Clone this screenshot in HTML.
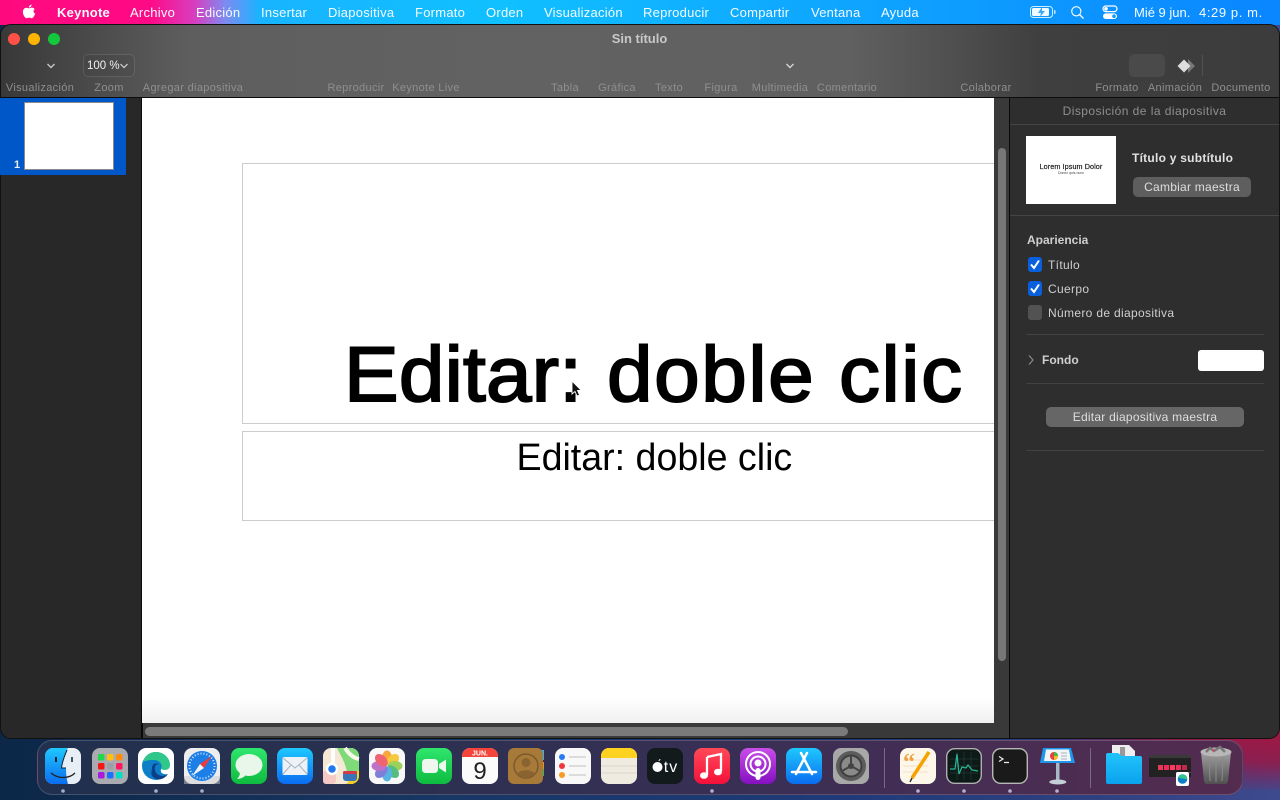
<!DOCTYPE html>
<html lang="es"><head><meta charset="utf-8"><title>Keynote</title>
<style>
*{box-sizing:border-box;margin:0;padding:0}
html,body{width:1280px;height:800px;overflow:hidden}
body{position:relative;background:linear-gradient(90deg,#0c2747 0,#173765 35%,#1f3a78 65%,#2e4080 85%,#3e4a8e 100%);font-family:"Liberation Sans",sans-serif}
.a{position:absolute}
.t{position:absolute;white-space:nowrap;line-height:16px}
.c{transform:translateX(-50%)}
#glow{left:1050px;top:700px;width:300px;height:90px;background:radial-gradient(ellipse at 80% 30%,#a5163f 0,#8a1f50 40%,rgba(120,30,80,0) 75%)}
#menu{left:0;top:0;width:1280px;height:25px;background:linear-gradient(90deg,#ff0a7e 0,#ff0a86 150px,#d63fc0 195px,#7f8af0 225px,#19b4ff 260px,#10c0ff 500px,#0fa8ff 800px,#0a86ff 1280px);color:#fff;font-size:13px}
#menu .t{top:5px;color:#f4fbff;letter-spacing:.25px}
#win{left:0;top:24px;width:1280px;height:715px;border-radius:11px;overflow:hidden;background:#282828;border:1px solid #111}
#tb{left:-1px;top:0;width:1282px;height:73px;background:linear-gradient(90deg,#383838 0,#444 60px,#5e5e5e 190px,#626262 500px,#606060 850px,#4e4e4e 960px,#3f3f3f 1040px,#3c3c3c 1280px);border-bottom:1px solid #0c0c0c}
.lab{font-size:11px;color:#8f8f8f;top:55px;letter-spacing:.33px}
.dot{width:12px;height:12px;border-radius:50%;top:8px}
.p{color:#cfcfcf;font-size:12px;letter-spacing:.33px}
.line{height:1px;background:#454545}
.cb{left:1027px;width:14px;height:15px;border-radius:3px;background:#0a60dc}
.cb svg{position:absolute;left:0;top:0}
.btn{background:#5e5e5e;border-radius:5px;color:#dedede;font-size:12px;text-align:center;line-height:20px;letter-spacing:.25px}
.w{position:absolute;top:231px;white-space:nowrap;font-size:78px;line-height:90px;color:#000;-webkit-text-stroke:1.9px #000;transform:scaleX(1.05);transform-origin:0 0}
</style></head><body>
<div class="a" id="glow"></div>

<div class="a" id="menu">
<svg class="a" style="left:22px;top:4px" width="14" height="16" viewBox="0 0 14 16"><path fill="#fff" d="M9.600 0.600C9.700 2 8.400 3.600 6.900 3.500 6.700 2.100 8.200 .7 9.600 .6ZM7 4.300C7.700 4.300 8.700 3.500 10 3.600 11 3.700 12 4.100 12.700 5.100 11 6.200 11.200 8.700 13.200 9.600 12.700 11.200 11.200 14.200 9.600 14.200 8.700 14.200 8.300 13.600 7.100 13.600 5.900 13.600 5.400 14.200 4.600 14.200 3 14.200 .9 10.900 .9 8 .9 5.200 2.700 3.700 4.400 3.700 5.500 3.700 6.300 4.300 7 4.300Z"/></svg>
<span class="t" style="left:57px;font-weight:700">Keynote</span>
<span class="t" style="left:130px">Archivo</span>
<span class="t" style="left:196px">Edición</span>
<span class="t" style="left:261px">Insertar</span>
<span class="t" style="left:328px">Diapositiva</span>
<span class="t" style="left:415px">Formato</span>
<span class="t" style="left:486px">Orden</span>
<span class="t" style="left:544px">Visualización</span>
<span class="t" style="left:643px">Reproducir</span>
<span class="t" style="left:730px">Compartir</span>
<span class="t" style="left:811px">Ventana</span>
<span class="t" style="left:881px">Ayuda</span>
<svg class="a" style="left:1030px;top:5px" width="26" height="14" viewBox="0 0 26 14"><rect x=".5" y="1.500" width="22" height="11" rx="3" fill="none" stroke="#cfeeff" stroke-width="1"/><rect x="2" y="3" width="17" height="8" rx="1.500" fill="#f2fbff"/><path d="M12 2 8 8h3l-1 4 5-6h-3z" fill="#3aa8f5"/><rect x="24" y="5" width="1.500" height="4" rx=".7" fill="#bfe8ff"/></svg>
<svg class="a" style="left:1070px;top:5px" width="15" height="15" viewBox="0 0 15 15"><circle cx="6.300" cy="6.300" r="4.600" fill="none" stroke="#fff" stroke-width="1.100"/><path d="M9.800 9.800 13.500 13.500" stroke="#fff" stroke-width="1.300"/></svg>
<svg class="a" style="left:1102px;top:5px" width="16" height="15" viewBox="0 0 16 15"><rect x="1" y="1" width="14" height="5.600" rx="2.800" fill="none" stroke="#fff" stroke-width="1.200"/><circle cx="4" cy="3.800" r="1.800" fill="#fff"/><rect x="1" y="8.400" width="14" height="5.600" rx="2.800" fill="#fff"/><circle cx="12" cy="11.200" r="1.800" fill="#0f9cff"/></svg>
<span class="t" style="left:1134px;letter-spacing:0">Mié 9 jun.</span>
<span class="t" style="left:1199px;letter-spacing:.6px">4:29 p. m.</span>
</div>

<div class="a" id="win">
<div class="a" id="tb">
<div class="a dot" style="left:8px;background:#ff5147"></div>
<div class="a dot" style="left:28px;background:#ffb400"></div>
<div class="a dot" style="left:48px;background:#13c83a"></div>
<span class="t c" style="left:639.500px;top:6px;font-size:13px;font-weight:700;color:#c8c8c8">Sin título</span>
<svg class="a" style="left:46px;top:37px" width="10" height="8" viewBox="0 0 10 8"><path d="M1.500 2 5 5.500 8.500 2" fill="none" stroke="#c4c4c4" stroke-width="1.400"/></svg>
<div class="a" style="left:83px;top:29px;width:52px;height:23px;border-radius:5px;background:rgba(0,0,0,.04);border:1px solid rgba(255,255,255,.11)"></div>
<span class="t" style="left:87px;top:33px;font-size:11.500px;color:#f0f0f0">100 %</span>
<svg class="a" style="left:119px;top:37px" width="10" height="8" viewBox="0 0 10 8"><path d="M1.500 2 5 5.500 8.500 2" fill="none" stroke="#d4d4d4" stroke-width="1.200"/></svg>
<svg class="a" style="left:785px;top:37px" width="10" height="8" viewBox="0 0 10 8"><path d="M1.500 2 5 5.500 8.500 2" fill="none" stroke="#d4d4d4" stroke-width="1.400"/></svg>
<div class="a" style="left:1129px;top:29px;width:36px;height:23px;border-radius:5px;background:#4a4a4a"></div>
<svg class="a" style="left:1176px;top:33px" width="20" height="16" viewBox="0 0 20 16"><path d="M12 1 19 8 12 15z" fill="#777"/><path d="M8 1.500 14.500 8 8 14.500 1.500 8z" fill="#ddd"/></svg>
<div class="a" style="left:1202px;top:30px;width:1px;height:21px;background:#515151"></div>
<span class="t lab c" style="left:40px">Visualización</span>
<span class="t lab c" style="left:109px">Zoom</span>
<span class="t lab c" style="left:193px">Agregar diapositiva</span>
<span class="t lab c" style="left:356px">Reproducir</span>
<span class="t lab c" style="left:426px">Keynote Live</span>
<span class="t lab c" style="left:565px">Tabla</span>
<span class="t lab c" style="left:617px">Gráfica</span>
<span class="t lab c" style="left:669px">Texto</span>
<span class="t lab c" style="left:721px">Figura</span>
<span class="t lab c" style="left:780px">Multimedia</span>
<span class="t lab c" style="left:847px">Comentario</span>
<span class="t lab c" style="left:986px">Colaborar</span>
<span class="t lab c" style="left:1117px">Formato</span>
<span class="t lab c" style="left:1175px">Animación</span>
<span class="t lab c" style="left:1241px">Documento</span>
</div>

<div class="a" style="left:-1px;top:73px;width:126px;height:77px;background:#0058c8"></div>
<div class="a" style="left:23px;top:77px;width:90px;height:68px;background:#fff;border:1px solid #8a8a8a"></div>
<span class="t" style="left:13px;top:132px;font-size:11px;font-weight:700;color:#e6eefb">1</span>
<div class="a" style="left:140px;top:73px;width:2px;height:641px;background:#0a0a0a"></div>

<div class="a" style="left:142px;top:73px;width:867px;height:641px;background:#393939"></div>
<div class="a" style="left:141px;top:73px;width:852px;height:625px;background:linear-gradient(180deg,#fff 0,#fff 600px,#f0f0f0 625px);overflow:hidden">
  <div class="a" style="left:100px;top:65px;width:760px;height:261px;border:1px solid #ccc"></div>
  <div class="a" style="left:100px;top:333px;width:760px;height:90px;border:1px solid #ccc"></div>
  <span class="w" style="left:202px;letter-spacing:.2px">Editar:</span>
  <span class="w" style="left:465px;letter-spacing:1.500px">doble</span>
  <span class="w" style="left:697px;letter-spacing:1.500px">clic</span>
  <span class="a" style="left:374.500px;top:338px;white-space:nowrap;font-size:37.600px;line-height:42px;color:#000">Editar: doble clic</span>
</div>
<svg class="a" style="left:569px;top:355px" width="14" height="20" viewBox="0 0 14 20"><path d="M2 1V14L5 11.500 7 16 9.500 15 7.500 10.500H11.500Z" fill="#111" stroke="#fff" stroke-width=".9"/></svg>
<div class="a" style="left:997px;top:123px;width:8px;height:513px;border-radius:4px;background:#777"></div>
<div class="a" style="left:144px;top:702px;width:703px;height:9px;border-radius:5px;background:#7a7a7a"></div>

<div class="a" style="left:1008px;top:73px;width:1px;height:641px;background:#0a0a0a"></div>
<div class="a" style="left:1009px;top:73px;width:271px;height:641px;background:#2e2e2e"></div>
<span class="t p c" style="left:1143.500px;top:78px;color:#8f8f8f;letter-spacing:.45px">Disposición de la diapositiva</span>
<div class="a line" style="left:1009px;top:99px;width:271px"></div>
<div class="a" style="left:1025px;top:111px;width:90px;height:68px;background:#fff"></div>
<span class="t c" style="left:1070px;top:134px;font-size:7.200px;color:#222;letter-spacing:.1px;-webkit-text-stroke:.2px #222">Lorem Ipsum Dolor</span>
<span class="t c" style="left:1070px;top:140px;font-size:3.500px;color:#444">Donec quis nunc</span>
<span class="t" style="left:1131px;top:125px;font-size:12px;font-weight:700;color:#e2e2e2;letter-spacing:.25px">Título y subtítulo</span>
<div class="a btn" style="left:1132px;top:152px;width:118px;height:20px">Cambiar maestra</div>
<div class="a line" style="left:1009px;top:190px;width:271px"></div>
<span class="t p" style="left:1026px;top:207px;font-weight:700;color:#cfcfcf;letter-spacing:0">Apariencia</span>
<div class="a cb" style="top:232px"><svg width="14" height="15" viewBox="0 0 14 15"><path d="M3 7.500 6 11 11 3.500" fill="none" stroke="#fff" stroke-width="2"/></svg></div>
<span class="t p" style="left:1047px;top:232px">Título</span>
<div class="a cb" style="top:256px"><svg width="14" height="15" viewBox="0 0 14 15"><path d="M3 7.500 6 11 11 3.500" fill="none" stroke="#fff" stroke-width="2"/></svg></div>
<span class="t p" style="left:1047px;top:256px">Cuerpo</span>
<div class="a cb" style="top:280px;background:#525252"></div>
<span class="t p" style="left:1047px;top:280px">Número de diapositiva</span>
<div class="a line" style="left:1025px;top:309px;width:238px;background:#424242"></div>
<svg class="a" style="left:1026px;top:329px" width="8" height="12" viewBox="0 0 8 12"><path d="M2 1.500 6 6 2 10.500" fill="none" stroke="#8a8a8a" stroke-width="1.200"/></svg>
<span class="t p" style="left:1041px;top:327px;font-weight:700;color:#cfcfcf;letter-spacing:0">Fondo</span>
<div class="a" style="left:1197px;top:325px;width:66px;height:21px;border-radius:3px;background:#fff"></div>
<div class="a line" style="left:1025px;top:358px;width:238px;background:#424242"></div>
<div class="a btn" style="left:1045px;top:382px;width:198px;height:20px;background:#666">Editar diapositiva maestra</div>
<div class="a line" style="left:1025px;top:425px;width:238px;background:#424242"></div>
</div>
<div class="a" style="left:0;top:98px;width:1px;height:77px;background:#0058c8"></div>

<div class="a" style="left:37px;top:740px;width:1206px;height:55px;border-radius:15px;background:linear-gradient(90deg,#20304e 0,#2b3050 30%,#3a2f55 60%,#4c2d52 85%,#532c50 100%);border:1px solid rgba(255,255,255,.16)"></div>

<svg class="a" style="left:0;top:0" width="1280" height="800" viewBox="0 0 1280 800">
<defs>
<linearGradient id="gb" x1="0" y1="0" x2="0" y2="1"><stop offset="0" stop-color="#1fc8ff"/><stop offset="1" stop-color="#0a6cf0"/></linearGradient>
<linearGradient id="gg" x1="0" y1="0" x2="0" y2="1"><stop offset="0" stop-color="#2fe66d"/><stop offset="1" stop-color="#0ebb3f"/></linearGradient>
<linearGradient id="gr" x1="0" y1="0" x2="0" y2="1"><stop offset="0" stop-color="#ff4a58"/><stop offset="1" stop-color="#f5103a"/></linearGradient>
<linearGradient id="gp" x1="0" y1="0" x2="0" y2="1"><stop offset="0" stop-color="#c94ee8"/><stop offset="1" stop-color="#8410c0"/></linearGradient>
<linearGradient id="gf" x1="0" y1="0" x2="0" y2="1"><stop offset="0" stop-color="#22c4fb"/><stop offset="1" stop-color="#0aa2ee"/></linearGradient>
<linearGradient id="gt" x1="0" y1="0" x2="0" y2="1"><stop offset="0" stop-color="#a0a0a0"/><stop offset="1" stop-color="#505050"/></linearGradient>
</defs>

<!-- Finder -->
<g transform="translate(45,748)"><rect width="36" height="36" rx="8" fill="#e8eef5"/><path d="M8 0H23C19 8 17 14 16.500 20H21C21 26 21.500 31 23 36H8A8 8 0 0 1 0 28V8A8 8 0 0 1 8 0Z" fill="url(#gb)"/><path d="M6 25C13 31 24 31 30 25" fill="none" stroke="#222" stroke-width="1.300"/><rect x="10" y="9" width="2" height="5" fill="#123"/><rect x="26" y="9" width="2" height="5" fill="#456"/><path d="M22 2C19 9 17 15 16.500 20H21" fill="none" stroke="#123" stroke-width="1"/></g>
<!-- Launchpad -->
<g transform="translate(92,748)"><rect width="36" height="36" rx="8" fill="#a9abb0"/>
<rect x="6" y="6" width="6.500" height="6.500" rx="1.500" fill="#1fd84a"/><rect x="15" y="6" width="6.500" height="6.500" rx="1.500" fill="#ffc010"/><rect x="24" y="6" width="6.500" height="6.500" rx="1.500" fill="#ff8a10"/>
<rect x="6" y="15" width="6.500" height="6.500" rx="1.500" fill="#f51515"/><rect x="15" y="15" width="6.500" height="6.500" rx="1.500" fill="#9aa0a8"/><rect x="24" y="15" width="6.500" height="6.500" rx="1.500" fill="#ff1a60"/>
<rect x="6" y="24" width="6.500" height="6.500" rx="1.500" fill="#a81ae0"/><rect x="15" y="24" width="6.500" height="6.500" rx="1.500" fill="#1a70ff"/><rect x="24" y="24" width="6.500" height="6.500" rx="1.500" fill="#05dcc5"/></g>
<!-- Edge -->
<g transform="translate(138,748)"><rect width="36" height="36" rx="8" fill="#fff"/><circle cx="18" cy="18" r="14" fill="#0c7fc8"/><path d="M5 14C7 7 12 4 18 4 26 4 32 10 32 17 32 22 27 23 23 21 25 17 22 12 16 12 10 12 6 13 5 14Z" fill="#30c88a"/><path d="M14 20C14 15 19 14 22 17 20 15 16 17 17 22 18 27 24 30 30 26 26 32 19 33 15 29 12 26 14 23 14 20Z" fill="#0b3f8a"/><path d="M32 17C32 22 27 23 23 21 22 24 24 27 30 26 32 23 32.500 20 32 17Z" fill="#fff"/></g>
<!-- Safari -->
<g transform="translate(184,748)"><rect width="36" height="36" rx="8" fill="#eee"/><rect y="28" width="36" height="8" fill="#ccc" opacity=".5"/><circle cx="18" cy="18" r="15" fill="#1c7ee6"/><circle cx="18" cy="18" r="12.500" fill="none" stroke="#cfe6ff" stroke-width="2" stroke-dasharray="1 2"/><path d="M28 8 16 16 20 20Z" fill="#f03a3a"/><path d="M8 28 16 16 20 20Z" fill="#f4f4f4"/></g>
<!-- Messages -->
<g transform="translate(231,748)"><rect width="36" height="36" rx="8" fill="url(#gg)"/><ellipse cx="18" cy="17" rx="13.500" ry="11" fill="#e9f6ea"/><path d="M9 24C9 28 7 30 6 31 10 31 13 29 15 27Z" fill="#e9f6ea"/></g>
<!-- Mail -->
<g transform="translate(277,748)"><rect width="36" height="36" rx="8" fill="url(#gb)"/><rect x="5.500" y="9" width="25" height="18" rx="1.500" fill="#eef1f5"/><path d="M6 10 18 20 30 10M6 26 14 17M30 26 22 17" fill="none" stroke="#a8b4c2" stroke-width="1"/></g>
<!-- Maps -->
<g transform="translate(323,748)"><rect width="36" height="36" rx="8" fill="#f5e9d6"/><path d="M14 0H28A8 8 0 0 1 36 8V24H24C22 14 18 8 14 0Z" fill="#7fdb7a"/><path d="M22 0C26 6 30 10 36 11" fill="none" stroke="#f7f7ea" stroke-width="4"/><rect x="8" y="0" width="4" height="36" fill="#fff"/><rect x="0" y="22" width="13" height="14" fill="#f7c9c4" rx="3"/><path d="M23 36 36 22V28A8 8 0 0 1 28 36Z" fill="#f5d020"/><circle cx="9" cy="21" r="5" fill="#1f78ef" stroke="#fff" stroke-width="2.500"/><rect x="20" y="23" width="14" height="10" rx="3" fill="#3a74b8"/><rect x="20" y="23" width="14" height="3" rx="1.500" fill="#d8374a"/></g>
<!-- Photos -->
<g transform="translate(369,748)"><rect width="36" height="36" rx="8" fill="#f8f8f8"/>
<g opacity=".85"><ellipse cx="18" cy="10" rx="5" ry="7.500" fill="#f79a1c"/><ellipse cx="18" cy="10" rx="5" ry="7.500" fill="#f5c01e" transform="rotate(45 18 18)"/><ellipse cx="18" cy="10" rx="5" ry="7.500" fill="#8fcb3e" transform="rotate(90 18 18)"/><ellipse cx="18" cy="10" rx="5" ry="7.500" fill="#39b36d" transform="rotate(135 18 18)"/><ellipse cx="18" cy="10" rx="5" ry="7.500" fill="#3aa7e0" transform="rotate(180 18 18)"/><ellipse cx="18" cy="10" rx="5" ry="7.500" fill="#6a6ccf" transform="rotate(225 18 18)"/><ellipse cx="18" cy="10" rx="5" ry="7.500" fill="#b45ac0" transform="rotate(270 18 18)"/><ellipse cx="18" cy="10" rx="5" ry="7.500" fill="#ee4a5c" transform="rotate(315 18 18)"/></g></g>
<!-- FaceTime -->
<g transform="translate(416,748)"><rect width="36" height="36" rx="8" fill="url(#gg)"/><rect x="6" y="11" width="16" height="14" rx="3.500" fill="#eef8ef"/><path d="M23 16 30 11.500V24.500L23 20Z" fill="#eef8ef"/></g>
<!-- Calendar -->
<g transform="translate(462,748)"><rect width="36" height="36" rx="8" fill="#fbfbfb"/><path d="M8 0H28A8 8 0 0 1 36 8V9H0V8A8 8 0 0 1 8 0Z" fill="#f5443a"/><text x="18" y="7.500" font-size="7" font-weight="700" fill="#fff" text-anchor="middle" font-family="Liberation Sans">JUN.</text><text x="18" y="31" font-size="24" fill="#222" text-anchor="middle" font-family="Liberation Sans">9</text></g>
<!-- Contacts -->
<g transform="translate(508,748)"><path d="M30 2H36V12H34V34H30Z" fill="#3ab0e8"/><rect x="33" y="14" width="3" height="7" fill="#f08a1c"/><rect x="33" y="21" width="3" height="7" fill="#35b56a"/><rect width="35" height="36" rx="6" fill="#a87a3a"/><circle cx="18" cy="18" r="12" fill="none" stroke="#7d5a2c" stroke-width="1.500"/><circle cx="18" cy="14.500" r="4.500" fill="#8a6430"/><path d="M9 26C11 21 25 21 27 26 23 30 13 30 9 26Z" fill="#8a6430"/></g>
<!-- Reminders -->
<g transform="translate(555,748)"><rect width="36" height="36" rx="8" fill="#f8f8f8"/><circle cx="7" cy="9" r="3" fill="#2a7af5"/><circle cx="7" cy="18" r="3" fill="#f0363a"/><circle cx="7" cy="27" r="3" fill="#f89a20"/><path d="M14 9H31M14 18H31M14 27H31" stroke="#ccc" stroke-width="1.300"/></g>
<!-- Notes -->
<g transform="translate(601,748)"><rect width="36" height="36" rx="8" fill="#f0ebe0"/><path d="M8 0H28A8 8 0 0 1 36 8V10H0V8A8 8 0 0 1 8 0Z" fill="#ffd21f"/><path d="M0 18H36M0 25H36" stroke="#d9d4ca" stroke-width="1"/></g>
<!-- TV -->
<g transform="translate(647,748)"><rect width="36" height="36" rx="8" fill="#121a1c"/><circle cx="10.500" cy="19" r="5" fill="#fff"/><path d="M11.500 13C11.500 12 12.500 11 13.500 11 13.500 12 12.500 13 11.500 13Z" fill="#fff"/><text x="24" y="24" font-size="16" fill="#fff" text-anchor="middle" letter-spacing="1" font-family="Liberation Sans">tv</text></g>
<!-- Music -->
<g transform="translate(694,748)"><rect width="36" height="36" rx="8" fill="url(#gr)"/><path d="M13 9 27 6V23" fill="none" stroke="#fff" stroke-width="2.300"/><path d="M13 9V27" stroke="#fff" stroke-width="2.300"/><ellipse cx="10" cy="27.500" rx="4" ry="3.300" fill="#fff"/><ellipse cx="24" cy="24" rx="4" ry="3.300" fill="#fff"/></g>
<!-- Podcasts -->
<g transform="translate(740,748)"><rect width="36" height="36" rx="8" fill="url(#gp)"/><circle cx="18" cy="16" r="12" fill="none" stroke="#fff" stroke-width="2"/><circle cx="18" cy="16" r="7.500" fill="none" stroke="#fff" stroke-width="2"/><circle cx="18" cy="15" r="3.500" fill="#fff"/><rect x="15.500" y="20" width="5" height="12" rx="2.500" fill="#fff"/></g>
<!-- App Store -->
<g transform="translate(786,748)"><rect width="36" height="36" rx="8" fill="url(#gb)"/><path d="M21 5 10 26M15 5 26 26M6 24H30" stroke="#fff" stroke-width="2.500" stroke-linecap="round" fill="none"/></g>
<!-- Settings -->
<g transform="translate(833,748)"><rect width="36" height="36" rx="8" fill="#a8a8a8"/><circle cx="18" cy="18" r="15" fill="#5c5c5c"/><circle cx="18" cy="18" r="10.500" fill="#8a8a8a" stroke="#3f3f3f" stroke-width="2"/><circle cx="18" cy="18" r="3" fill="#444"/><path d="M18 8V18L9 23M18 18 27 23" stroke="#444" stroke-width="2" fill="none"/></g>

<path d="M884.500 748V788M1090.500 748V788" stroke="#7a6a80" stroke-width="1"/>

<!-- Pages -->
<g transform="translate(900,748)"><rect width="36" height="36" rx="8" fill="#fdf7ea"/><path d="M3 12H28M3 18H28M3 24H28" stroke="#f3e2c8" stroke-width="1"/><text x="3" y="22" font-size="24" font-weight="700" fill="#f0a040" font-family="Liberation Serif">“</text><path d="M29 4 12 30" stroke="#f5a100" stroke-width="3.500"/><path d="M12 30 10 34" stroke="#333" stroke-width="1.500"/></g>
<!-- Activity Monitor -->
<g transform="translate(946,748)"><rect x=".7" y=".7" width="34.600" height="34.600" rx="8" fill="#0d1a17" stroke="#b0b0b0" stroke-width="1.400"/><path d="M4 11H32M4 18H32M4 25H32M11 4V32M18 4V32M25 4V32" stroke="#213a33" stroke-width=".8"/><path d="M4 21H9L11 6 13 26 16 19 20 20 22 17 26 22 32 23" fill="none" stroke="#29b89a" stroke-width="1.200"/></g>
<!-- Terminal -->
<g transform="translate(992,748)"><rect x=".7" y=".7" width="34.600" height="34.600" rx="8" fill="#1a1a1a" stroke="#b8b8b8" stroke-width="1.400"/><path d="M7 8.500 11 11 7 13.500M12 14.500H17" fill="none" stroke="#eee" stroke-width="1.200"/></g>
<!-- Keynote -->
<g transform="translate(1039,747)"><path d="M4 1H32L36 16H1Z" fill="#1e96ec"/><path d="M7 2.500H30L32 14H5Z" fill="#f2f4f6"/><circle cx="15" cy="9" r="4" fill="#e8403a"/><path d="M15 5A4 4 0 0 1 19 9H15Z" fill="#3ac04a"/><path d="M15 9H19A4 4 0 0 1 15 13Z" fill="#f5c020"/><path d="M22 6H28M22 9H28M22 12H28" stroke="#a8b2bc" stroke-width="1"/><rect x="17" y="16" width="3.500" height="17" fill="#a8b8c4"/><ellipse cx="18.800" cy="35" rx="8.500" ry="2.500" fill="#c4d0d8"/></g>
<!-- Folder -->
<g transform="translate(1105,744)"><path d="M7 1H24L30 7V22H7Z" fill="#eee"/><rect x="15" y="3" width="5" height="14" fill="#999"/><path d="M1 11A2 2 0 0 1 3 9H13L17 12H35A2 2 0 0 1 37 14V38A2 2 0 0 1 35 40H3A2 2 0 0 1 1 38Z" fill="url(#gf)"/></g>
<!-- Screenshot thumb -->
<g transform="translate(1149,755)"><rect width="42" height="22" fill="#222"/><rect y="0" width="42" height="3" fill="#3a3a3a"/><rect x="9" y="10" width="5" height="5" fill="#e8385a"/><rect x="15" y="10" width="5" height="5" fill="#f02a5a"/><rect x="21" y="10" width="5" height="5" fill="#ff3a5a"/><rect x="27" y="10" width="5" height="5" fill="#e8305a"/><rect x="33" y="10" width="5" height="5" fill="#c02a50"/><rect x="27" y="17" width="15" height="1" fill="#555"/></g>
<g transform="translate(1176,772)"><rect width="13" height="14" rx="2" fill="#fff"/><circle cx="6.500" cy="7" r="4.800" fill="#0c7fc8"/><path d="M2 5.500C4 1.500 10 1.500 11.300 6.500 9 8.500 7 5.500 5 6.500Z" fill="#30c88a"/></g>
<!-- Trash -->
<g transform="translate(1200,746)"><path d="M1 6H31L28 35A3 3 0 0 1 25 38H7A3 3 0 0 1 4 35Z" fill="url(#gt)"/><ellipse cx="16" cy="6" rx="15.500" ry="4.500" fill="#b8b8b8"/><path d="M6 6 10 2 14 5 20 1 25 6" fill="none" stroke="#777" stroke-width="2.500"/><circle cx="13" cy="4" r="1.300" fill="#d84a6a"/><path d="M9 12 10 35M16 12V36M23 12 22 35" stroke="#8a8a8a" stroke-width="1"/></g>

<g fill="#a4b0c8"><circle cx="63" cy="791" r="1.800"/><circle cx="156" cy="791" r="1.800"/><circle cx="202" cy="791" r="1.800"/></g>
<g fill="#b8b0d0"><circle cx="712" cy="791" r="1.800"/><circle cx="918" cy="791" r="1.800"/><circle cx="964" cy="791" r="1.800"/><circle cx="1010" cy="791" r="1.800"/><circle cx="1057" cy="791" r="1.800"/></g>
</svg>
</body></html>
